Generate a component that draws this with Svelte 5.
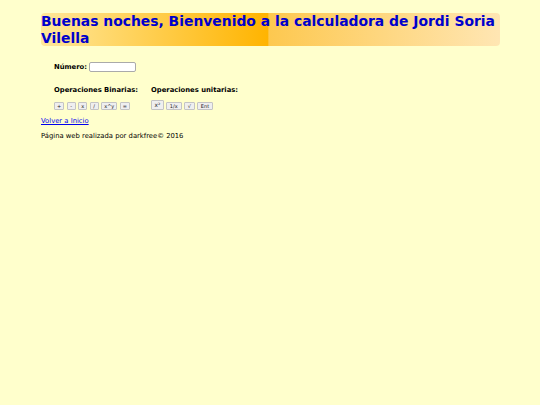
<script>
  const binarias = ['+', '-', 'x', '/', 'x^y', '='];
  const unitarias = ['x²', '1/x', '√', 'Ent'];
  let numero = $state('');

  function handleSubmit(event) {
    event.preventDefault();
  }
</script>

<div class="page">
  <h1>Buenas noches, Bienvenido a la calculadora de Jordi Soria Vilella</h1>

  <form class="calc" onsubmit={handleSubmit}>
    <div class="numero">
      <label for="numero">Número:</label>
      <input id="numero" type="text" bind:value={numero}>
    </div>

    <div class="ops">
      <div class="grupo">
        <h2>Operaciones Binarias:</h2>
        <div class="btns">
          {#each binarias as op}
            <button type="button">{op}</button>
          {/each}
        </div>
      </div>
      <div class="grupo">
        <h2>Operaciones unitarias:</h2>
        <div class="btns unit">
          {#each unitarias as op}
            <button type="button" class:big={op === 'x²'}>{op}</button>
          {/each}
        </div>
      </div>
    </div>
  </form>

  <a href="#inicio">Volver a Inicio</a>
  <p>Página web realizada por darkfree© 2016</p>
</div>

<style>
  :global(body) {
    margin: 0;
    background: #ffffcc;
  }

  .page {
    padding: 13px 40px 0 41px;
    font-family: "DejaVu Sans", Verdana, sans-serif;
    font-size: 6.8px;
    color: #000;
  }

  h1 {
    margin: 0;
    height: 33px;
    font-size: 13.9px;
    line-height: 16.5px;
    font-weight: bold;
    color: #0000cc;
    border-radius: 4px;
    background: linear-gradient(to right, #ffe79a 0%, #ffb400 49.5%, #fdc84f 49.6%, #ffe6b3 100%);
  }

  .calc {
    padding: 16px 0 0 13px;
  }

  .numero {
    display: flex;
    align-items: center;
    gap: 2px;
  }

  label, h2 {
    font-size: 6.8px;
    font-weight: bold;
  }

  input {
    box-sizing: border-box;
    width: 47px;
    height: 9.5px;
    padding: 0;
    border: 1px solid #aaa;
    border-radius: 2px;
    background: #fff;
  }

  .ops {
    display: flex;
    gap: 13px;
    margin-top: 14px;
  }

  h2 {
    margin: 0 0 5px;
    line-height: 9px;
  }

  .btns {
    display: flex;
    align-items: flex-end;
    gap: 2.5px;
    min-height: 10px;
  }

  .btns.unit {
    gap: 2px;
  }

  button {
    height: 8px;
    min-width: 9px;
    padding: 0 2px;
    font-family: inherit;
    font-size: 5px;
    line-height: 6px;
    color: #222;
    background: #efefef;
    border: 1px solid #c4c4c4;
    border-radius: 1px;
  }

  .unit button {
    min-width: 10px;
    padding: 0 3px;
  }

  .unit button.big {
    height: 10px;
    padding: 0 2.5px;
    font-size: 5.8px;
  }

  a {
    display: block;
    margin-top: 7.5px;
    line-height: 9px;
    color: #0000ee;
    text-decoration: underline;
  }

  p {
    margin: 6px 0 0;
    line-height: 9px;
  }
</style>
